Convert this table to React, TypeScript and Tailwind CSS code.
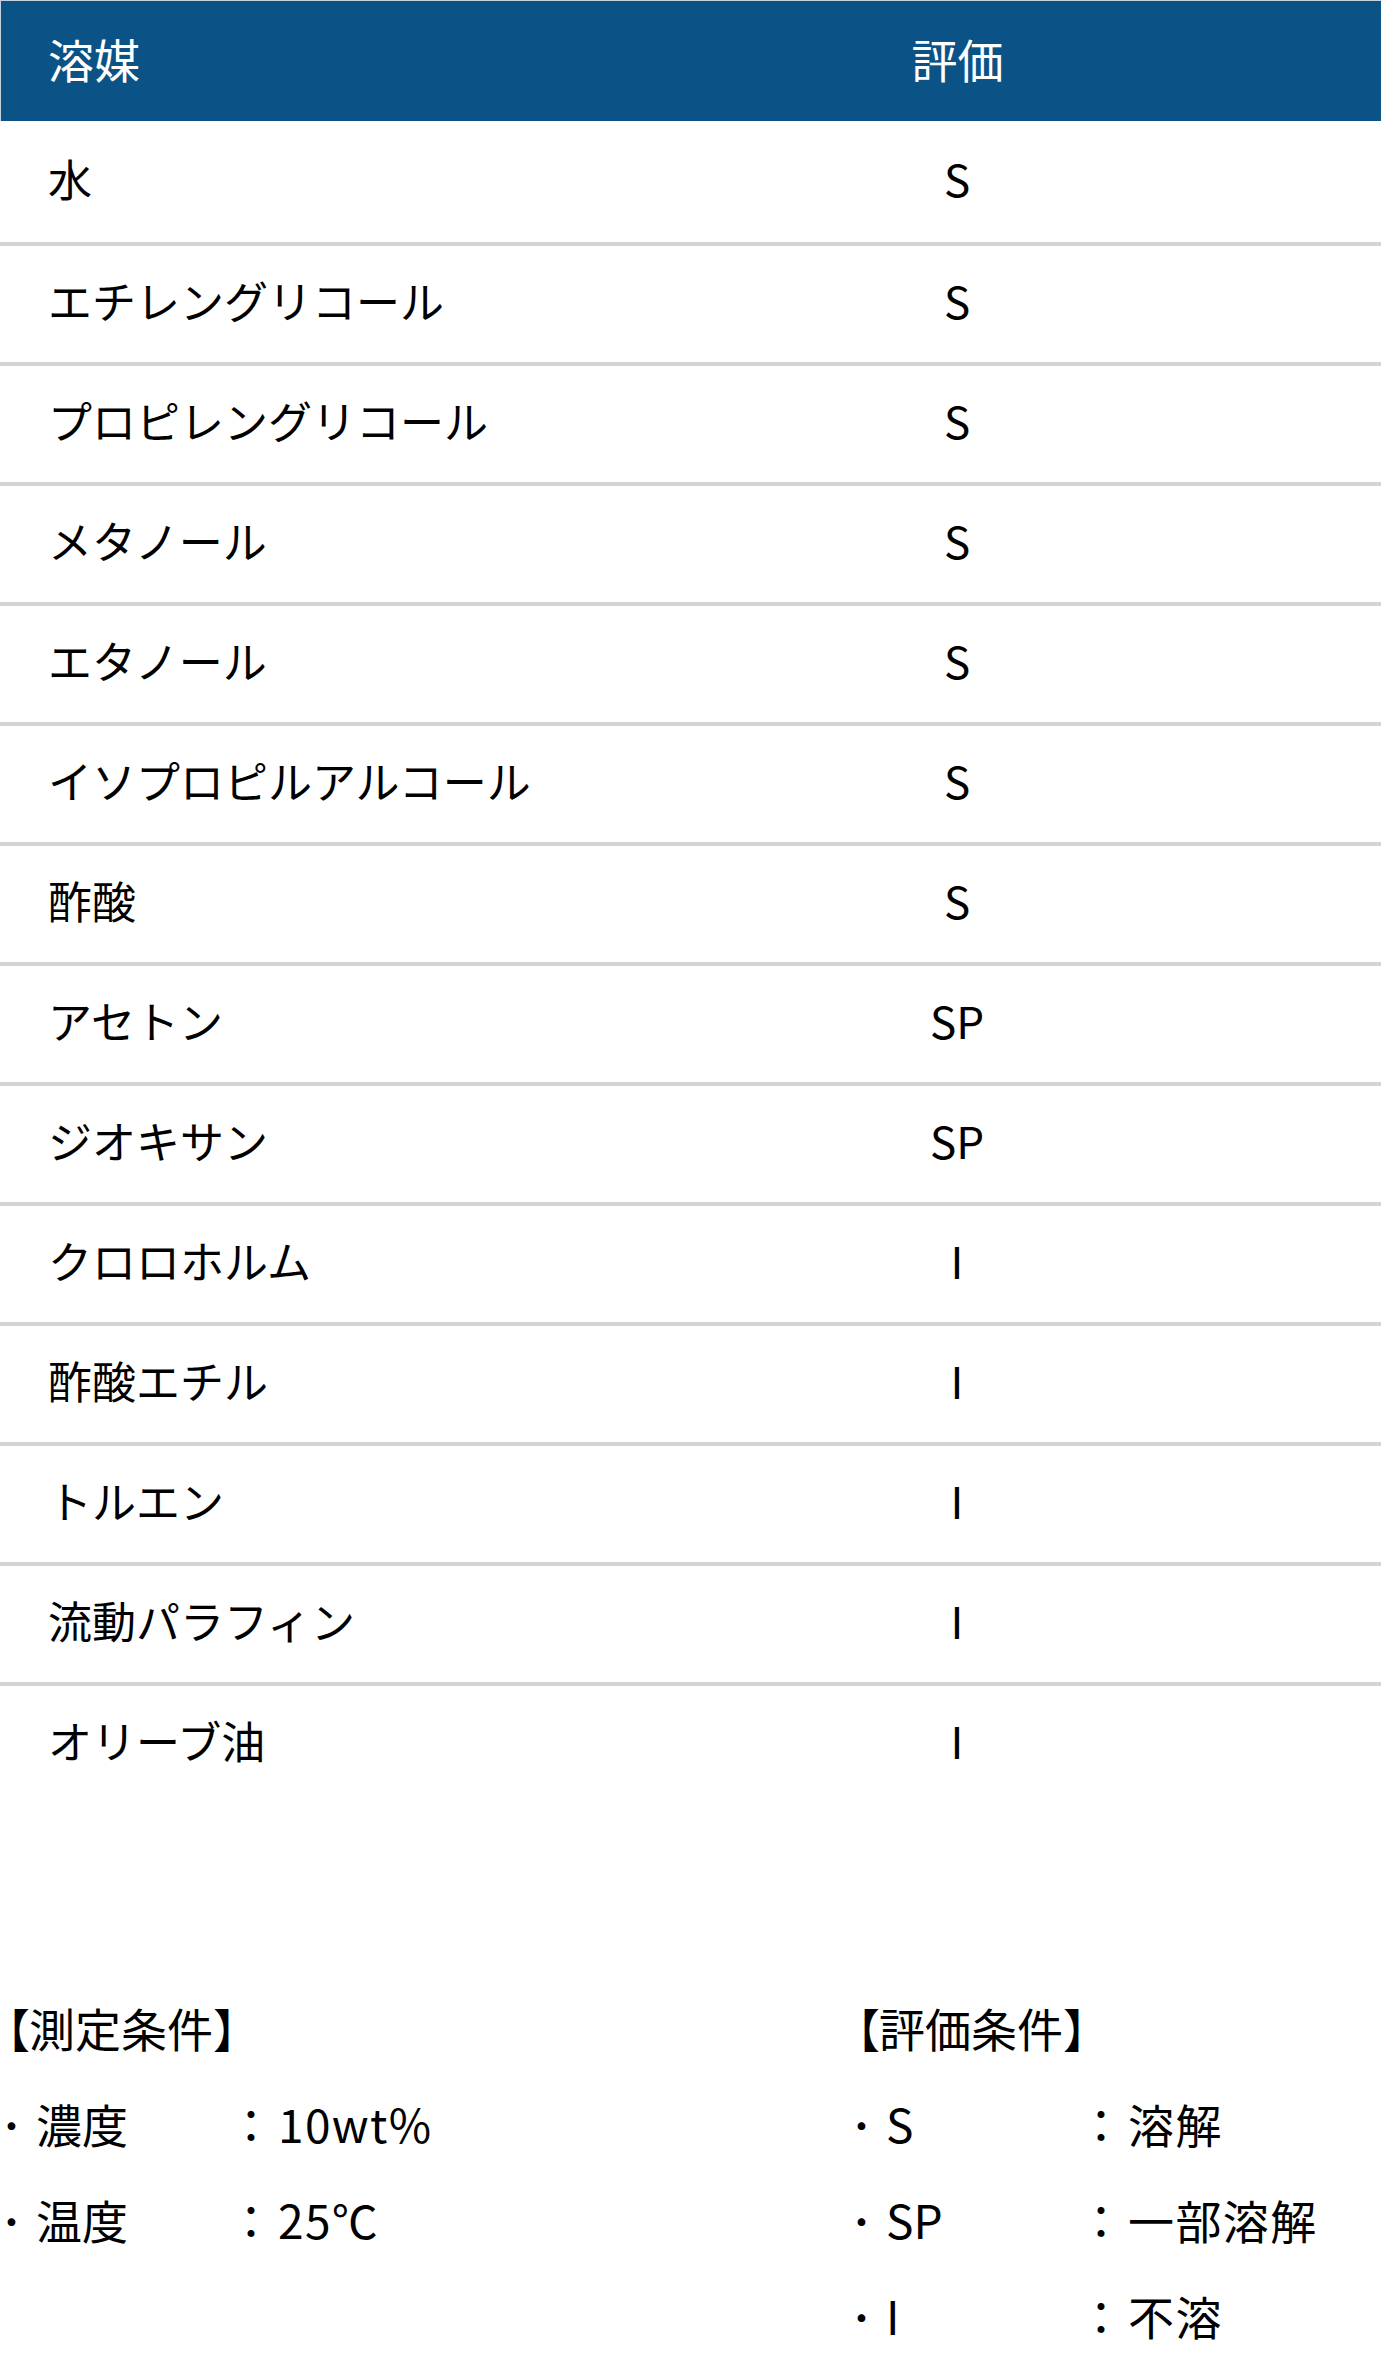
import React from "react";

const rows: [string, string][] = [
  ["水", "S"],
  ["エチレングリコール", "S"],
  ["プロピレングリコール", "S"],
  ["メタノール", "S"],
  ["エタノール", "S"],
  ["イソプロピルアルコール", "S"],
  ["酢酸", "S"],
  ["アセトン", "SP"],
  ["ジオキサン", "SP"],
  ["クロロホルム", "I"],
  ["酢酸エチル", "I"],
  ["トルエン", "I"],
  ["流動パラフィン", "I"],
  ["オリーブ油", "I"],
];

const font = { fontFamily: '"Noto Sans CJK JP", "Noto Sans", sans-serif' };

function Item({ label, value }: { label: string; value: string }) {
  return (
    <div className="flex h-[96px] items-center pb-[6px]">
      <div className="flex w-[228px] items-center">
        <span className="inline-block w-[20px] text-center">･</span>
        <span className="ml-[16px]">{label}</span>
      </div>
      <span className="inline-block w-[46px] text-center">：</span>
      <span className="ml-[4px] tracking-[0.03em]">{value}</span>
    </div>
  );
}

function Heading({ text }: { text: string }) {
  return (
    <div className="flex h-[96px] items-center pb-[6px]">
      <span className="ml-[6px] [font-feature-settings:'palt']">【</span>
      <span>{text}</span>
      <span>】</span>
    </div>
  );
}

export default function App() {
  return (
    <div className="w-[1381px] bg-white text-black" style={font}>
      <div className="grid h-[121px] grid-cols-[533px_1fr] items-center border-t border-l border-[#c5d2de] bg-[#0b5386] pb-[6px] text-[46px] text-white">
        <div className="pl-[47px]">溶媒</div>
        <div className="text-center">評価</div>
      </div>
      {rows.map(([name, v], i) => (
        <div
          key={name}
          className={
            i === 0
              ? "grid h-[121px] grid-cols-[533px_1fr] items-center pb-[8px] text-[44px]"
              : "grid h-[120px] grid-cols-[533px_1fr] items-center border-t-4 border-[#d4d4d4] pb-[8px] text-[44px]"
          }
        >
          <div className="pl-[48px]">{name}</div>
          <div className="text-center">{v}</div>
        </div>
      ))}
      <div className="mt-[180px] grid grid-cols-[850px_1fr] text-[46px] leading-[96px]">
        <div>
          <Heading text="測定条件" />
          <Item label="濃度" value="10wt%" />
          <Item label="温度" value="25℃" />
        </div>
        <div>
          <Heading text="評価条件" />
          <Item label="S" value="溶解" />
          <Item label="SP" value="一部溶解" />
          <Item label="I" value="不溶" />
        </div>
      </div>
    </div>
  );
}
